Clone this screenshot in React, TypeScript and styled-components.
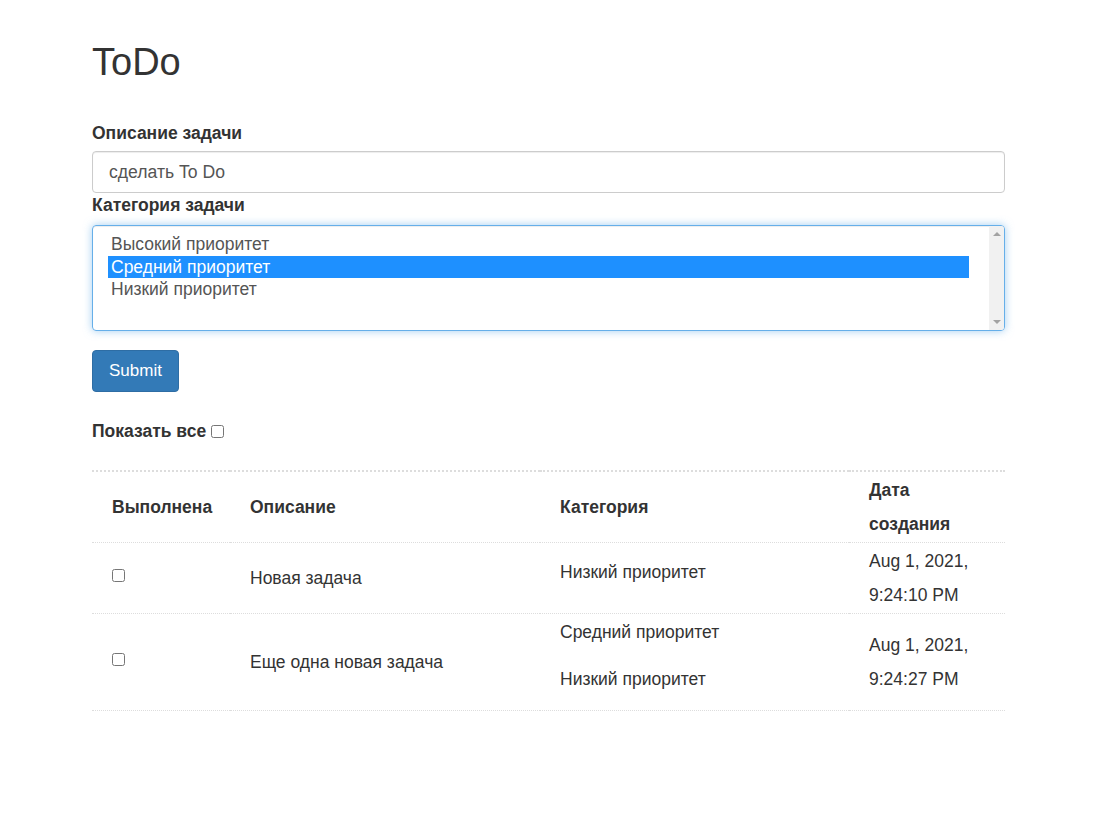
import styled, { createGlobalStyle } from "styled-components";

const GlobalStyle = createGlobalStyle`
  html, body {
    margin: 0;
    padding: 0;
    background: #ffffff;
  }
  body {
    font-family: "Liberation Sans", Arial, Helvetica, sans-serif;
    font-size: 17.5px;
    color: #333333;
  }
`;

const Page = styled.div`
  width: 913px;
  padding: 42px 0 40px 92px;
`;

const Title = styled.h1`
  margin: 0 0 41px;
  font-size: 38px;
  line-height: 40px;
  font-weight: 500;
  color: #333333;
`;

const Label = styled.label<{ $gap?: number; $top?: number }>`
  display: block;
  font-weight: 700;
  line-height: 20px;
  margin-top: ${({ $top }) => $top ?? 0}px;
  margin-bottom: ${({ $gap }) => $gap ?? 8}px;
`;

const TextInput = styled.input`
  display: block;
  box-sizing: border-box;
  width: 100%;
  height: 42px;
  padding: 0 16px;
  border: 1px solid #cccccc;
  border-radius: 4px;
  box-shadow: inset 0 1px 1px rgba(0, 0, 0, 0.075);
  font-family: inherit;
  font-size: 17.6px;
  color: #555555;
  outline: none;
`;

const ListBox = styled.div`
  box-sizing: border-box;
  display: flex;
  height: 106px;
  border: 1px solid #66afe9;
  border-radius: 4px;
  box-shadow: inset 0 1px 1px rgba(0, 0, 0, 0.075),
    0 0 8px rgba(102, 175, 233, 0.6);
  overflow: hidden;
`;

const OptionList = styled.div`
  flex: 1;
  padding: 7px 20px 0 15px;
`;

const Option = styled.div<{ $selected?: boolean }>`
  height: 22.5px;
  line-height: 22.5px;
  padding-left: 3px;
  color: ${({ $selected }) => ($selected ? "#ffffff" : "#555555")};
  background: ${({ $selected }) => ($selected ? "#1e90ff" : "transparent")};
`;

const ScrollTrack = styled.div`
  width: 15px;
  background: #f1f1f1;
  display: flex;
  flex-direction: column;
  justify-content: space-between;
  align-items: center;
  padding: 6px 0;
`;

const Arrow = styled.span<{ $down?: boolean }>`
  width: 0;
  height: 0;
  border-left: 4px solid transparent;
  border-right: 4px solid transparent;
  ${({ $down }) =>
    $down ? "border-top: 4px solid #a3a3a3;" : "border-bottom: 4px solid #a3a3a3;"}
`;

const SubmitButton = styled.button`
  display: block;
  margin-top: 19px;
  height: 42px;
  padding: 0 16px;
  border: 1px solid #2e6da4;
  border-radius: 4px;
  background: #337ab7;
  color: #ffffff;
  font-family: inherit;
  font-size: 17px;
  cursor: pointer;
`;

const ShowAll = styled.label`
  display: flex;
  align-items: center;
  gap: 5px;
  margin-top: 29px;
  font-weight: 700;
  line-height: 20px;
`;

const Check = styled.input.attrs({ type: "checkbox" })`
  width: 13px;
  height: 13px;
  margin: 0;
`;

const Table = styled.table`
  width: 100%;
  margin-top: 29px;
  border-collapse: collapse;
  table-layout: fixed;
  border-top: 2px dotted #dddddd;
`;

const HeadCell = styled.th<{ $width: number }>`
  box-sizing: border-box;
  width: ${({ $width }) => $width}px;
  padding: 1px 20px;
  text-align: left;
  vertical-align: middle;
  font-weight: 700;
  line-height: 34px;
  border-bottom: 1px dotted #dddddd;
`;

const Cell = styled.td`
  padding: 1px 20px;
  vertical-align: middle;
  line-height: 34px;
  border-bottom: 1px dotted #dddddd;
`;

const Category = styled.p`
  margin: 0 0 13px;
`;

const CheckCell = styled(Cell)`
  line-height: 0;
  padding-bottom: 6px;
`;

const categories = ["Высокий приоритет", "Средний приоритет", "Низкий приоритет"];

const tasks = [
  {
    text: "Новая задача",
    cats: ["Низкий приоритет"],
    date: ["Aug 1, 2021,", "9:24:10 PM"],
  },
  {
    text: "Еще одна новая задача",
    cats: ["Средний приоритет", "Низкий приоритет"],
    date: ["Aug 1, 2021,", "9:24:27 PM"],
  },
];

export default function App() {
  return (
    <>
      <GlobalStyle />
      <Page>
        <Title>ToDo</Title>
        <Label>Описание задачи</Label>
        <TextInput defaultValue="сделать To Do" />
        <Label $top={2} $gap={10}>
          Категория задачи
        </Label>
        <ListBox>
          <OptionList>
            {categories.map((c, i) => (
              <Option key={c} $selected={i === 1}>
                {c}
              </Option>
            ))}
          </OptionList>
          <ScrollTrack>
            <Arrow />
            <Arrow $down />
          </ScrollTrack>
        </ListBox>
        <SubmitButton>Submit</SubmitButton>
        <ShowAll>
          Показать все <Check />
        </ShowAll>
        <Table>
          <thead>
            <tr>
              <HeadCell $width={138}>Выполнена</HeadCell>
              <HeadCell $width={310}>Описание</HeadCell>
              <HeadCell $width={309}>Категория</HeadCell>
              <HeadCell $width={156}>Дата создания</HeadCell>
            </tr>
          </thead>
          <tbody>
            {tasks.map((t) => (
              <tr key={t.text}>
                <CheckCell>
                  <Check />
                </CheckCell>
                <Cell>{t.text}</Cell>
                <Cell>
                  {t.cats.map((c) => (
                    <Category key={c}>{c}</Category>
                  ))}
                </Cell>
                <Cell>
                  {t.date[0]}
                  <br />
                  {t.date[1]}
                </Cell>
              </tr>
            ))}
          </tbody>
        </Table>
      </Page>
    </>
  );
}
